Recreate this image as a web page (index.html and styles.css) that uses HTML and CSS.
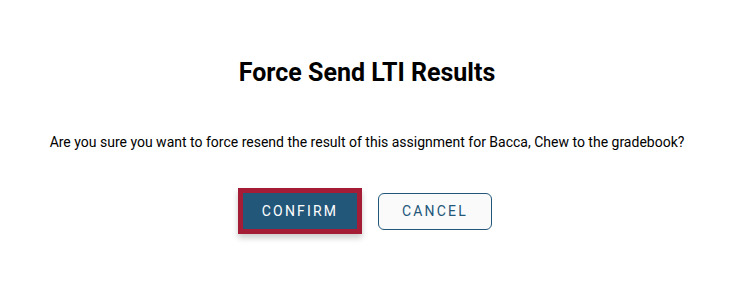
FILE: index.html
```html
<!DOCTYPE html>
<html>

<head>
    <link rel="stylesheet" href="styles.css">
</head>

<body>

    <div id="dialog">
        <h2 class="dialog-title">Force Send LTI Results</h2>
        <p class="dialog-text">Are you sure you want to force resend the result of this assignment for Bacca, Chew to the gradebook?</p>
        <div class="dialog-actions">
            <button class="btn btn-primary focused">Confirm</button>
            <button class="btn btn-outline">Cancel</button>
        </div>
    </div>

</body>

</html>
```

FILE: styles.css
```css
* {
    box-sizing: border-box;
}

body {
    padding: 0px;
    margin: 0px;
    background: #ffffff;
    font-family: Roboto, "Liberation Sans", sans-serif;
    color: #000000;
}

#dialog {
    display: flex;
    flex-direction: column;
    align-items: center;
    padding-top: 57px;
}

.dialog-title {
    margin: 0px;
    font-size: 25px;
    font-weight: 700;
    line-height: 32px;
}

.dialog-text {
    margin: 0px;
    margin-top: 43px;
    font-size: 14px;
    line-height: 20px;
}

.dialog-actions {
    display: flex;
    align-items: center;
    gap: 16px;
    margin-top: 36px;
    margin-right: 4px;
    padding-bottom: 20px;
}

.btn {
    width: 114px;
    height: 37px;
    padding: 0px;
    border-radius: 6px;
    font-family: Roboto, "Liberation Sans", sans-serif;
    font-size: 14px;
    letter-spacing: 2.2px;
    text-transform: uppercase;
    cursor: pointer;
}

.btn-primary {
    background: #22577a;
    color: #ffffff;
    border: 1px solid #22577a;
}

/* focused button gets a thick red ring */
.btn-primary.focused {
    width: 124px;
    height: 46px;
    border-radius: 0px;
    border: 5px solid #a51c36;
    box-shadow: 0px 4px 6px rgba(0, 0, 0, 0.2);
}

.btn-outline {
    background: #fafafa;
    color: #22577a;
    border: 1px solid #22577a;
}
```
